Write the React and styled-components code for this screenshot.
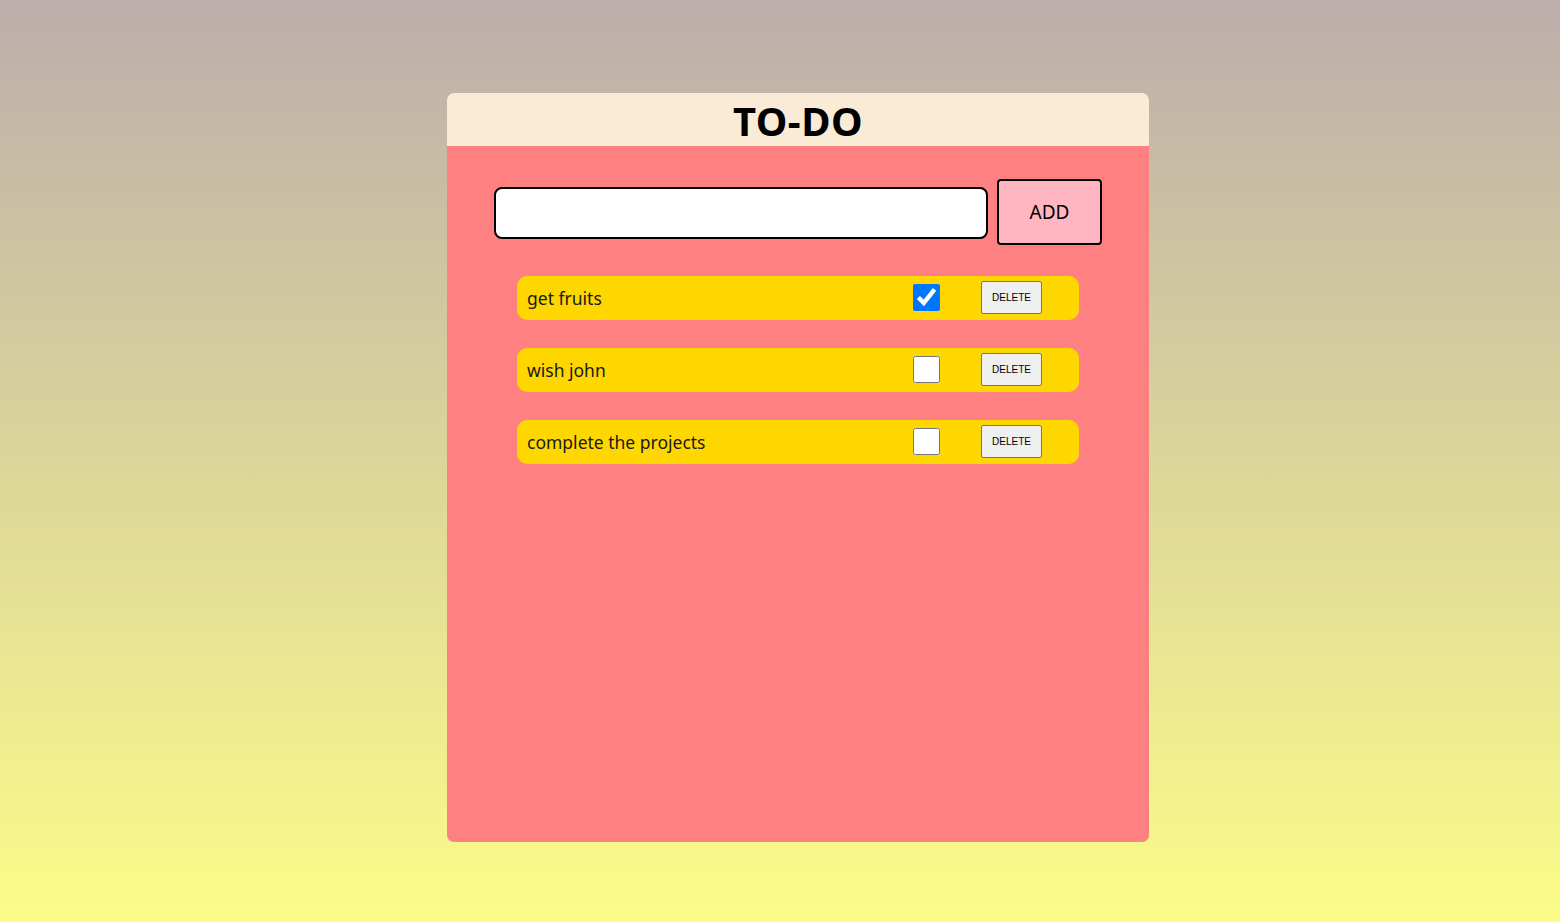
import React, { useState } from "react";
import styled, { createGlobalStyle } from "styled-components";

const GlobalStyle = createGlobalStyle`
  html, body {
    margin: 0;
    padding: 0;
  }
  body {
    min-height: 922px;
    background: linear-gradient(to bottom, #bbaeab, #fcfc88);
    font-family: "Noto Sans", "Open Sans", sans-serif;
  }
`;

const Page = styled.div`
  display: flex;
  justify-content: center;
  padding-top: 93px;
  padding-left: 36px;
`;

const Card = styled.div`
  width: 702px;
  height: 749px;
  border-radius: 7px;
  overflow: hidden;
  background-color: #ff8080;
  display: flex;
  flex-direction: column;
`;

const Header = styled.div`
  height: 53px;
  background-color: #faebd7;
  display: flex;
  align-items: center;
  justify-content: center;

  h1 {
    margin: 2px 0 0;
    font-size: 40px;
    font-weight: bold;
    letter-spacing: 0.5px;
    font-family: "Noto Sans", sans-serif;
  }
`;

const InputRow = styled.div`
  display: flex;
  justify-content: center;
  align-items: center;
  gap: 9px;
  margin-top: 33px;

  .todoInput {
    box-sizing: border-box;
    width: 494px;
    height: 52px;
    margin-top: 2px;
    border: 2px solid black;
    border-radius: 8px;
    background: white;
    outline: none;
    font-size: 18px;
    padding: 0 10px;
  }

  .addBtn {
    box-sizing: border-box;
    width: 105px;
    height: 66px;
    border: 2px solid black;
    border-radius: 4px;
    background-color: #ffb6c1;
    font-family: "Noto Sans", sans-serif;
    font-size: 19px;
    cursor: pointer;
  }
`;

const TodoList = styled.ul`
  list-style: none;
  margin: 31px 0 0;
  padding: 0;
  display: flex;
  flex-direction: column;
  align-items: center;
  gap: 28px;
`;

const TodoItem = styled.li`
  box-sizing: border-box;
  width: 562px;
  height: 44px;
  border-radius: 10px;
  background-color: #ffd700;
  display: flex;
  align-items: center;
  padding-left: 10px;

  .itemText {
    flex: 1;
    font-size: 17.5px;
    color: #1a1a1a;
  }

  .doneCheck {
    width: 27px;
    height: 27px;
    margin: 0 41px 1px 0;
    cursor: pointer;
  }

  .deleteBtn {
    box-sizing: border-box;
    width: 61px;
    height: 33px;
    margin: 0 37px 2px 0;
    font-family: "Liberation Sans", Arial, sans-serif;
    font-size: 10px;
    background-color: #efefef;
    border: 1px solid #767676;
    border-radius: 2px;
    cursor: pointer;
  }
`;

function App() {
  const [todos, setTodos] = useState([
    { id: 1, text: "get fruits", done: true },
    { id: 2, text: "wish john", done: false },
    { id: 3, text: "complete the projects", done: false },
  ]);
  const [input, setInput] = useState("");

  const addHandler = () => {
    if (!input.trim()) return;
    setTodos([...todos, { id: Date.now(), text: input, done: false }]);
    setInput("");
  };

  const toggleHandler = (id) => {
    setTodos(todos.map((t) => (t.id === id ? { ...t, done: !t.done } : t)));
  };

  const deleteHandler = (id) => {
    setTodos(todos.filter((t) => t.id !== id));
  };

  return (
    <>
      <GlobalStyle />
      <Page>
        <Card>
          <Header>
            <h1>TO-DO</h1>
          </Header>
          <InputRow>
            <input
              className="todoInput"
              value={input}
              onChange={(e) => setInput(e.target.value)}
            />
            <button className="addBtn" onClick={addHandler}>ADD</button>
          </InputRow>
          <TodoList>
            {todos.map((todo) => (
              <TodoItem key={todo.id}>
                <span className="itemText">{todo.text}</span>
                <input
                  type="checkbox"
                  className="doneCheck"
                  checked={todo.done}
                  onChange={() => toggleHandler(todo.id)}
                />
                <button className="deleteBtn" onClick={() => deleteHandler(todo.id)}>
                  DELETE
                </button>
              </TodoItem>
            ))}
          </TodoList>
        </Card>
      </Page>
    </>
  );
}

export default App;
